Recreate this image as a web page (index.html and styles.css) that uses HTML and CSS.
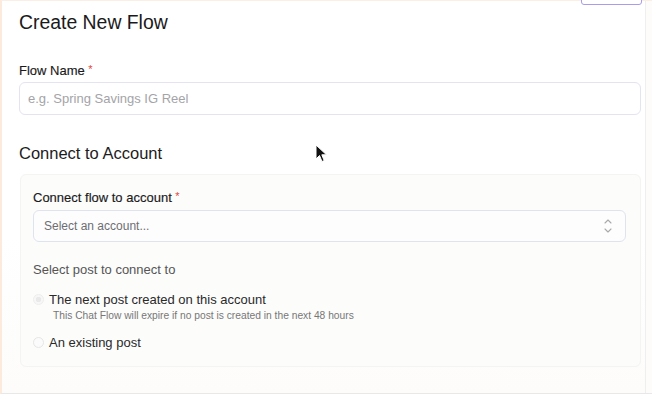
FILE: index.html
```html
<!DOCTYPE html>
<html>
<head>
<meta charset="utf-8">
<link rel="stylesheet" href="styles.css">
</head>
<body>
<div class="frame">
  <div class="top-btn"></div>
  <div class="panel">
    <h1 class="title">Create New Flow</h1>
    <div class="field">
      <label class="label">Flow Name <span class="req">*</span></label>
      <div class="input"><span class="placeholder">e.g. Spring Savings IG Reel</span></div>
    </div>
    <h2 class="section">Connect to Account</h2>
    <div class="card">
      <label class="label">Connect flow to account <span class="req">*</span></label>
      <div class="select">
        <span class="select-ph">Select an account...</span>
        <svg class="chev" width="10" height="18" viewBox="0 0 10 18"><path d="M2 6 L5 3 L8 6" fill="none" stroke="#a9a9ad" stroke-width="1.1" stroke-linecap="round" stroke-linejoin="round"/><path d="M2 12 L5 15 L8 12" fill="none" stroke="#a9a9ad" stroke-width="1.1" stroke-linecap="round" stroke-linejoin="round"/></svg>
      </div>
      <div class="sub-label">Select post to connect to</div>
      <div class="radio-row">
        <span class="radio checked"></span>
        <span class="radio-label">The next post created on this account</span>
      </div>
      <div class="hint">This Chat Flow will expire if no post is created in the next 48 hours</div>
      <div class="radio-row second">
        <span class="radio"></span>
        <span class="radio-label">An existing post</span>
      </div>
    </div>
  </div>
  <svg class="cursor" width="14" height="20" viewBox="0 0 14 20"><path d="M1 1 L1 15 L4.5 11.5 L7 17.5 L9.2 16.6 L6.8 10.8 L11.5 10.8 Z" fill="#111" stroke="#fff" stroke-width="1"/></svg>
</div>
</body>
</html>
```
FILE: styles.css
```css
* { box-sizing: border-box; }
html, body { margin: 0; padding: 0; background: #ffffff; }
body {
  font-family: "Liberation Sans", Arial, sans-serif;
  width: 652px;
  height: 394px;
  overflow: hidden;
}
.frame {
  position: relative;
  width: 652px;
  height: 394px;
  background: #fdfcfb;
  border-left: 2px solid #fcebdd;
  border-top: 1px solid #fbeee4;
  border-bottom: 1px solid #e8e8e8;
}
.panel {
  width: 644px;
  height: 392px;
  border-right: 1px solid #efefef;
  padding: 10px 4px 0 17px;
  background: linear-gradient(#ffffff, #ffffff 60%, #fdfcfb);
}
.top-btn {
  position: absolute;
  top: -5px;
  left: 579px;
  width: 61px;
  height: 9px;
  border: 1px solid #a99ce8;
  border-radius: 3px;
  background: #fff;
  z-index: 2;
}
.title {
  margin: 0;
  font-size: 19.4px;
  font-weight: 400;
  color: #1a1a1a;
  line-height: 22px;
}
.field { margin-top: 28px; }
.label {
  display: block;
  font-size: 13px;
  font-weight: 500;
  color: #1a1a1a;
  line-height: 16px;
  -webkit-text-stroke: 0.15px #1a1a1a;
}
.req { color: #e0483e; font-size: 11px; vertical-align: 2px; -webkit-text-stroke: 0; }
.input {
  margin-top: 3px;
  height: 33px;
  border: 1px solid #e4e3f1;
  border-radius: 6px;
  display: flex;
  align-items: center;
  padding-left: 8px;
  background: #fff;
}
.placeholder { font-size: 13px; color: #a4a4a8; }
.section {
  margin: 28px 0 0;
  font-size: 16.5px;
  font-weight: 400;
  color: #1c1c1c;
  line-height: 20px;
}
.card {
  margin-top: 11px;
  width: 621px;
  height: 193px;
  margin-left: 1px;
  background: #fcfcfb;
  border: 1px solid #f4f4f2;
  border-radius: 6px;
  padding: 13px 14px 0 12px;
}
.select {
  margin-top: 4px;
  height: 32px;
  border: 1px solid #dfe3f0;
  border-radius: 6px;
  background: #fdfdfd;
  display: flex;
  align-items: center;
  justify-content: space-between;
  padding: 0 12px 0 10px;
}
.select-ph { font-size: 12px; color: #6e6e72; }
.chev { display: block; }
.sub-label {
  margin-top: 20px;
  font-size: 13px;
  color: #555;
  line-height: 16px;
}
.radio-row {
  margin-top: 13px;
  display: flex;
  align-items: center;
  height: 16px;
}
.radio-row.second { margin-top: 12px; }
.radio {
  width: 11px;
  height: 11px;
  border-radius: 50%;
  border: 1px solid #e6e6e6;
  background: #fbfbfb;
  margin-right: 5px;
}
.radio.checked {
  border-color: #eeeeee;
  background: radial-gradient(circle, #e9e9e9 0 2.5px, #f7f7f7 3px);
}
.radio-label { font-size: 13px; color: #2a2a2a; }
.hint {
  margin-top: 2px;
  margin-left: 20px;
  font-size: 10.25px;
  color: #777;
  line-height: 13px;
}
.cursor {
  position: absolute;
  left: 313px;
  top: 143px;
}
```
